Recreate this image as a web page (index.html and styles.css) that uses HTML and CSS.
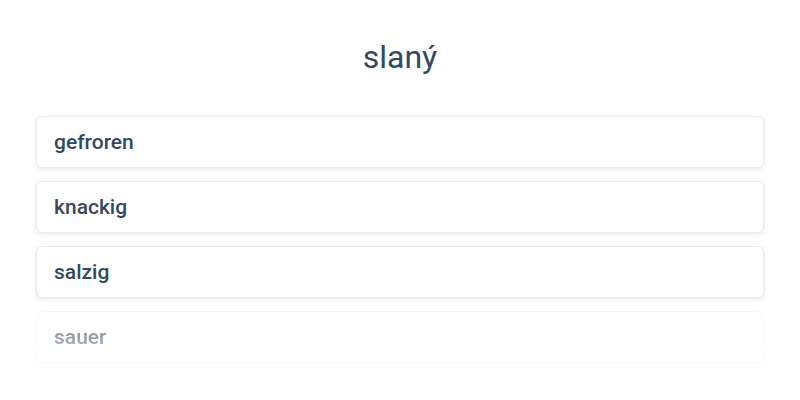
FILE: index.html
```html
<!DOCTYPE html>
<html>
<head>
<meta charset="utf-8">
<link rel="stylesheet" href="styles.css">
</head>
<body>
<div class="page">
  <h1 class="title">slaný</h1>
  <div class="list">
    <div class="card">gefroren</div>
    <div class="card">knackig</div>
    <div class="card">salzig</div>
    <div class="card faded">sauer</div>
  </div>
</div>
</body>
</html>
```
FILE: styles.css
```css
html, body {
  margin: 0;
  padding: 0;
  background: #ffffff;
}
.page {
  width: 800px;
  height: 400px;
  box-sizing: border-box;
  padding: 38px 36px 0 36px;
  font-family: Roboto, "Liberation Sans", sans-serif;
  overflow: hidden;
}
.title {
  margin: 0;
  font-size: 32px;
  line-height: 38px;
  font-weight: 400;
  color: #34495e;
  text-align: center;
}
.list {
  margin-top: 40px;
  display: flex;
  flex-direction: column;
  gap: 13px;
}
.card {
  height: 52px;
  box-sizing: border-box;
  border: 1px solid #ebebeb;
  border-radius: 6px;
  box-shadow: 0 1px 5px rgba(0, 0, 0, 0.1);
  padding: 0 17px;
  display: flex;
  align-items: center;
  font-size: 21px;
  font-weight: 500;
  color: #34495e;
  background: #fff;
}
.faded {
  opacity: 0.6;
  -webkit-mask-image: linear-gradient(to bottom, #000 40%, rgba(0,0,0,0.35) 100%);
  mask-image: linear-gradient(to bottom, #000 40%, rgba(0,0,0,0.35) 100%);
}
```
